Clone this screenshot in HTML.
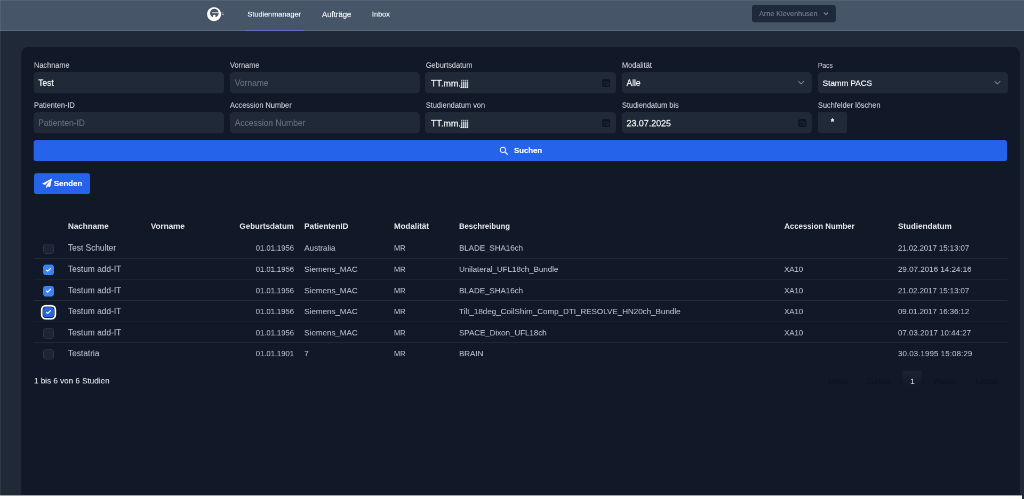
<!DOCTYPE html>
<html lang="de">
<head>
<meta charset="utf-8">
<title>Studienmanager</title>
<style>
*{box-sizing:border-box;margin:0;padding:0}
html,body{width:1024px;height:499px;overflow:hidden;background:#1f2937}
#stage{position:absolute;left:0;top:0;width:1920px;height:935.625px;transform:scale(0.5333333);transform-origin:0 0;overflow:hidden;background:#1f2937;will-change:transform;-webkit-text-stroke:0.188px}
body{position:relative;font-family:"Liberation Sans",sans-serif;color:#e5e7eb;-webkit-font-smoothing:antialiased}
.abs{position:absolute;white-space:nowrap}
/* nav */
#nav{position:absolute;left:0;top:0;width:1920px;height:57.75px;background:#475569;border-bottom:2.062px solid #5d6979}
#topline{position:absolute;left:0;top:0;width:1920px;height:2.438px;background:#536075}
.navlink{position:absolute;top:18.188px;font-size:13.688px;line-height:18.75px;color:#f1f5f9;-webkit-text-stroke:0.3px;white-space:nowrap}
#underline{position:absolute;left:460.875px;top:55.5px;width:108.375px;height:2.438px;background:#676fc2}
#user{position:absolute;left:1410px;top:9.375px;width:156.75px;height:32.25px;border-radius:4.875px;background:#1e293b}
#user span{position:absolute;left:13.5px;top:7.125px;font-size:13.406px;line-height:18.75px;color:#768092;white-space:nowrap}
/* card */
#card{position:absolute;left:39.938px;top:88.125px;width:1871.625px;height:840px;background:#111827;border-radius:13.5px 13.5px 0 0}
.lbl{position:absolute;font-size:13.781px;line-height:18.75px;color:#c6ccd6;white-space:nowrap}
.inp{position:absolute;width:356.625px;height:40.5px;border-radius:6.562px;background:#1f2937;font-size:15.75px;line-height:42px;padding-left:9px;color:#f3f4f6;white-space:nowrap}
.inp{-webkit-text-stroke:0.337px}.inp.ph{color:#667080;-webkit-text-stroke:0.15px}
.btn{position:absolute;background:#2563eb;border-radius:4.125px;color:#fff;font-weight:700;white-space:nowrap}
/* table */
.th{position:absolute;top:415.312px;font-size:14.812px;line-height:18.75px;font-weight:700;color:#e6e9ee;-webkit-text-stroke:0;white-space:nowrap}
.row{position:absolute;left:63.75px;width:1824.938px;height:39.694px;border-top:1.875px solid #232d3e}
.row span{position:absolute;top:11.25px;font-size:15px;line-height:18.75px;color:#b1b7c2;white-space:nowrap}
.row .c1{font-size:15.619px}.row .c2{font-size:14.344px}.row .c3{font-size:15px}.row .c4{font-size:13.875px}.row .c5{font-size:14.906px}.row .c6{font-size:14.363px}.row .c7{font-size:14.569px}
.cb{position:absolute;left:17.438px;top:11.438px;width:19.875px;height:19.875px;border-radius:4.5px;background:#1c2536;border:1.875px solid #2e3849}
.cb.on{background:#3b82f6;border-color:#3b82f6}
.cb.on.foc{background:#2563eb;border-color:#2563eb;box-shadow:0 0 0 1.312px #111827,0 0 0 4.312px #fff}
.cb svg{position:absolute;left:0px;top:-0.562px;width:18px;height:18px}
.pg{position:absolute;top:705.562px;font-size:15.375px;line-height:18.75px;color:#0d1423;-webkit-text-stroke:0.375px;white-space:nowrap}
</style>
</head>
<body>
<div id="stage">
<div id="nav">
  <svg class="abs" style="width:45px;height:37.5px;left:382.5px;top:7.5px" viewBox="0 0 24 20">
    <circle cx="9.77" cy="9.86" r="6.95" fill="#fff"/>
    <circle cx="10.1" cy="8.8" r="4.3" fill="#475569"/>
    <path d="M8.7 13.4 L8.7 11.1 Q10 10 11.3 11.1 L11.3 13.4 Z" fill="#fff"/>
    <rect x="8" y="8.1" width="6.4" height="0.9" fill="#dfe3ea"/>
    <path d="M17.2 8.7 L19.2 8.7 M17.4 10.2 L19.8 10.4" stroke="#aab3c1" stroke-width="0.8"/>
  </svg>
  <span class="navlink" style="left:464.062px">Studienmanager</span>
  <span class="navlink" style="left:603.75px;font-size:14.531px">Aufträge</span>
  <span class="navlink" style="left:697.5px">Inbox</span>
  <div id="underline"></div>
  <div id="user"><span>Arne Klevenhusen</span>
    <svg class="abs" style="width:11.25px;height:7.5px;left:133.125px;top:12.375px" viewBox="0 0 6 4"><path d="M0.9 0.8 L3 2.9 L5.1 0.8" fill="none" stroke="#7d8798" stroke-width="1"/></svg>
  </div>
</div>
<div id="topline"></div>
<div class="abs" style="left:0;top:0;width:2.062px;height:929.062px;background:rgba(255,255,255,0.075)"></div>

<div id="card"></div>

<!-- search form -->
<span class="lbl" style="left:63.75px;top:113.812px">Nachname</span>
<span class="lbl" style="left:431.25px;top:113.812px">Vorname</span>
<span class="lbl" style="left:798.375px;top:113.812px">Geburtsdatum</span>
<span class="lbl" style="left:1166.25px;top:113.812px">Modalität</span>
<span class="lbl" style="left:1533.75px;top:113.812px;font-size:12.562px">Pacs</span>
<div class="inp" style="left:62.625px;width:357.562px;top:134.531px">Test</div>
<div class="inp ph" style="left:431.25px;width:355.5px;top:134.531px">Vorname</div>
<div class="inp" style="left:797.438px;width:357.375px;top:134.531px;font-size:16.875px;line-height:43.125px;padding-left:10.5px">TT.mm.jjjj</div>
<div class="inp" style="left:1165.688px;top:134.531px">Alle</div>
<div class="inp" style="left:1533.562px;top:134.531px;font-size:15.188px">Stamm PACS</div>

<span class="lbl" style="left:63.75px;top:188.812px">Patienten-ID</span>
<span class="lbl" style="left:431.25px;top:188.812px">Accession Number</span>
<span class="lbl" style="left:798.375px;top:188.812px">Studiendatum von</span>
<span class="lbl" style="left:1166.25px;top:188.812px">Studiendatum bis</span>
<span class="lbl" style="left:1533.75px;top:188.812px">Suchfelder löschen</span>
<div class="inp ph" style="left:62.625px;width:357.562px;top:209.531px">Patienten-ID</div>
<div class="inp ph" style="left:431.25px;width:355.5px;top:209.531px">Accession Number</div>
<div class="inp" style="left:797.438px;width:357.375px;top:209.531px;font-size:16.875px;line-height:43.125px;padding-left:10.5px">TT.mm.jjjj</div>
<div class="inp" style="left:1165.688px;top:209.531px;font-size:16.688px;line-height:43.125px">23.07.2025</div>
<div class="inp" style="left:1533.562px;top:209.531px;width:54.75px;height:39.375px;border-radius:3.75px;padding:0;text-align:center;line-height:36.75px;font-size:16.125px;font-weight:700">*</div>


<!-- field icons -->
<svg class="abs cal" style="width:15.375px;height:15.375px;left:1128.75px;top:147.75px" viewBox="0 0 8 8"><rect x="0.6" y="0.8" width="6.8" height="6.6" rx="1.3" fill="#0c1322" fill-opacity="0.4" stroke="#0c1322" stroke-width="1.15"/><rect x="0.6" y="0.8" width="6.8" height="1.6" rx="0.6" fill="#0c1322" fill-opacity="0.7"/><rect x="1.9" y="4.2" width="2.3" height="1.7" fill="#0c1322" fill-opacity="0.75"/></svg>
<svg class="abs cal" style="width:15.375px;height:15.375px;left:1128.75px;top:222.75px" viewBox="0 0 8 8"><rect x="0.6" y="0.8" width="6.8" height="6.6" rx="1.3" fill="#0c1322" fill-opacity="0.4" stroke="#0c1322" stroke-width="1.15"/><rect x="0.6" y="0.8" width="6.8" height="1.6" rx="0.6" fill="#0c1322" fill-opacity="0.7"/><rect x="1.9" y="4.2" width="2.3" height="1.7" fill="#0c1322" fill-opacity="0.75"/></svg>
<svg class="abs cal" style="width:15.375px;height:15.375px;left:1497px;top:222.75px" viewBox="0 0 8 8"><rect x="0.6" y="0.8" width="6.8" height="6.6" rx="1.3" fill="#0c1322" fill-opacity="0.4" stroke="#0c1322" stroke-width="1.15"/><rect x="0.6" y="0.8" width="6.8" height="1.6" rx="0.6" fill="#0c1322" fill-opacity="0.7"/><rect x="1.9" y="4.2" width="2.3" height="1.7" fill="#0c1322" fill-opacity="0.75"/></svg>
<svg class="abs" style="width:12.188px;height:8.7px;left:1495.688px;top:150.938px" viewBox="0 0 7 5"><path d="M0.7 0.9 L3.5 3.7 L6.3 0.9" fill="none" stroke="#79828f" stroke-width="1.05" stroke-linecap="round" stroke-linejoin="round"/></svg>
<svg class="abs" style="width:12.188px;height:8.7px;left:1863.562px;top:150.938px" viewBox="0 0 7 5"><path d="M0.7 0.9 L3.5 3.7 L6.3 0.9" fill="none" stroke="#79828f" stroke-width="1.05" stroke-linecap="round" stroke-linejoin="round"/></svg>
<div class="btn" style="left:62.812px;top:262.5px;width:1825.688px;height:39.562px"></div>
<svg class="abs" style="width:17.438px;height:17.438px;left:935.625px;top:273.938px" viewBox="0 0 10 10"><circle cx="4" cy="4" r="2.9" fill="none" stroke="#eef2fd" stroke-width="1.15"/><path d="M6.2 6.2 L8.8 8.8" stroke="#eef2fd" stroke-width="1.3" stroke-linecap="round"/></svg>
<span class="abs" style="left:963.75px;top:273px;font-size:14.625px;line-height:18.75px;font-weight:700;color:#fff">Suchen</span>
<div class="btn" style="left:64.125px;top:324.75px;width:105px;height:39px"></div>
<svg class="abs" style="width:20.25px;height:20.25px;left:78.188px;top:334.125px" viewBox="0 0 10 10"><path d="M9.6 0.3 L0.4 5.2 L3.2 6.3 L8 1.8 L4.3 6.9 L4.3 9.4 L5.8 7.5 L7.9 8.4 Z" fill="#fff"/></svg>
<span class="abs" style="left:100.875px;top:335.438px;font-size:14.812px;line-height:18.75px;font-weight:700;color:#fff">Senden</span>

<!-- table -->
<span class="th" style="left:127.5px;font-size:15.113px">Nachname</span>
<span class="th" style="left:282.75px;font-size:15.169px">Vorname</span>
<span class="th" style="left:449.062px;font-size:14.944px">Geburtsdatum</span>
<span class="th" style="left:570.562px;font-size:15px">PatientenID</span>
<span class="th" style="left:738.75px;font-size:14.944px">Modalität</span>
<span class="th" style="left:860.625px;font-size:14.344px">Beschreibung</span>
<span class="th" style="left:1470.562px;font-size:14.588px">Accession Number</span>
<span class="th" style="left:1683.75px;font-size:15.113px">Studiendatum</span>

<div class="row" style="top:444.094px;border-top-color:#182030"><i class="cb"></i><span class="c1" style="left:63.75px">Test Schulter</span><span class="c2" style="right:1337.438px">01.01.1956</span><span class="c3" style="left:506.812px">Australia</span><span class="c4" style="left:675px">MR</span><span class="c5" style="left:796.875px">BLADE_SHA16ch</span><span class="c7" style="left:1620px">21.02.2017 15:13:07</span></div>
<div class="row" style="top:483.75px"><i class="cb on"><svg viewBox="0 0 16 16"><path d="M12.207 4.793a1 1 0 010 1.414l-5 5a1 1 0 01-1.414 0l-2-2a1 1 0 011.414-1.414L6.5 9.086l4.293-4.293a1 1 0 011.414 0z" fill="#fff"/></svg></i><span class="c1" style="left:63.75px">Testum add-IT</span><span class="c2" style="right:1337.438px">01.01.1956</span><span class="c3" style="left:506.812px">Siemens_MAC</span><span class="c4" style="left:675px">MR</span><span class="c5" style="left:796.875px">Unilateral_UFL18ch_Bundle</span><span class="c6" style="left:1406.812px">XA10</span><span class="c7" style="left:1620px;letter-spacing:0.244px">29.07.2016 14:24:16</span></div>
<div class="row" style="top:523.444px"><i class="cb on"><svg viewBox="0 0 16 16"><path d="M12.207 4.793a1 1 0 010 1.414l-5 5a1 1 0 01-1.414 0l-2-2a1 1 0 011.414-1.414L6.5 9.086l4.293-4.293a1 1 0 011.414 0z" fill="#fff"/></svg></i><span class="c1" style="left:63.75px">Testum add-IT</span><span class="c2" style="right:1337.438px">01.01.1956</span><span class="c3" style="left:506.812px">Siemens_MAC</span><span class="c4" style="left:675px">MR</span><span class="c5" style="left:796.875px">BLADE_SHA16ch</span><span class="c6" style="left:1406.812px">XA10</span><span class="c7" style="left:1620px">21.02.2017 15:13:07</span></div>
<div class="row" style="top:563.137px"><i class="cb on foc"><svg viewBox="0 0 16 16"><path d="M12.207 4.793a1 1 0 010 1.414l-5 5a1 1 0 01-1.414 0l-2-2a1 1 0 011.414-1.414L6.5 9.086l4.293-4.293a1 1 0 011.414 0z" fill="#fff"/></svg></i><span class="c1" style="left:63.75px">Testum add-IT</span><span class="c2" style="right:1337.438px">01.01.1956</span><span class="c3" style="left:506.812px">Siemens_MAC</span><span class="c4" style="left:675px">MR</span><span class="c5" style="left:796.875px;letter-spacing:0.084px">Tilt_18deg_CoilShim_Comp_DTI_RESOLVE_HN20ch_Bundle</span><span class="c6" style="left:1406.812px">XA10</span><span class="c7" style="left:1620px">09.01.2017 16:36:12</span></div>
<div class="row" style="top:602.625px"><i class="cb"></i><span class="c1" style="left:63.75px">Testum add-IT</span><span class="c2" style="right:1337.438px">01.01.1956</span><span class="c3" style="left:506.812px">Siemens_MAC</span><span class="c4" style="left:675px">MR</span><span class="c5" style="left:796.875px">SPACE_Dixon_UFL18ch</span><span class="c6" style="left:1406.812px">XA10</span><span class="c7" style="left:1620px;letter-spacing:0.188px">07.03.2017 10:44:27</span></div>
<div class="row" style="top:642.094px"><i class="cb"></i><span class="c1" style="left:63.75px">Testatria</span><span class="c2" style="right:1337.438px">01.01.1901</span><span class="c3" style="left:506.812px">7</span><span class="c4" style="left:675px">MR</span><span class="c5" style="left:796.875px">BRAIN</span><span class="c7" style="left:1620px;letter-spacing:0.319px">30.03.1995 15:08:29</span></div>
<div class="row" style="top:682.219px;height:1.875px;border-top-color:#161d2c"></div>

<span class="abs" style="left:63.75px;top:705px;font-size:15.188px;line-height:18.75px;color:#dfe2e7">1 bis 6 von 6 Studien</span>
<span class="pg" style="left:1553.25px">Erste</span>
<span class="pg" style="left:1624.312px">Zurück</span>
<div class="abs" style="left:1691.062px;top:695.25px;width:37.875px;height:37.875px;background:linear-gradient(#1a2233,#161e2e 45%,#111827 78%);border:1.125px solid #0e1524;border-top-color:#141b2a;border-radius:2.25px"></div>
<span class="pg" style="left:1706.625px;top:706.125px;font-size:15px;color:#d5dbe6;-webkit-text-stroke:0.188px">1</span>
<span class="pg" style="left:1749px">Weiter</span>
<span class="pg" style="left:1829.438px">Letzte</span>

<div class="abs" style="left:0;top:929.438px;width:1916.25px;height:9.375px;background:#fff"></div>
</div>
</body>
</html>
